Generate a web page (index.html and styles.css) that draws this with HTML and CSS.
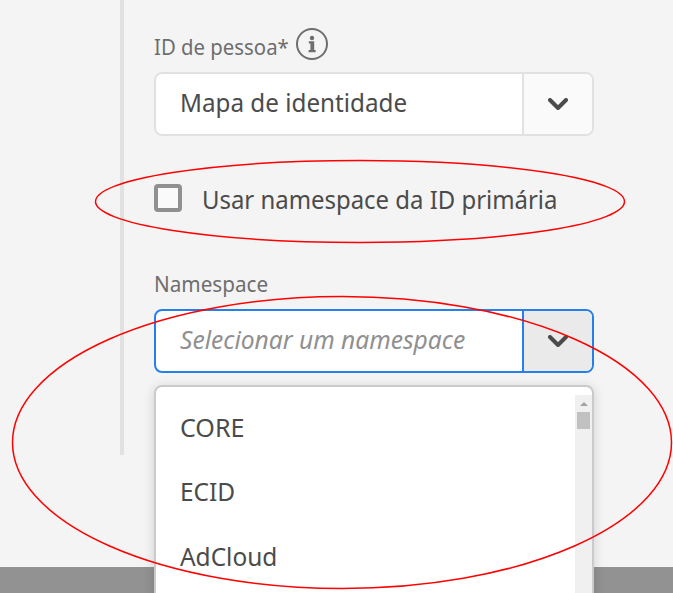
FILE: index.html
```html
<!DOCTYPE html>
<html lang="pt">
<head>
<meta charset="utf-8">
<title>ID de pessoa</title>
<link rel="stylesheet" href="styles.css">
</head>
<body>
<main class="page">
  <section class="panel">
    <div class="label-row">
      <span class="label label-person">ID de pessoa*</span>
      <svg class="info" viewBox="0 0 32 32" width="32" height="32">
        <circle cx="16" cy="16" r="15" fill="none" stroke="#6e6e6e" stroke-width="2"/>
        <circle cx="16" cy="10" r="2.2" fill="#6e6e6e"/>
        <path d="M12.800 13.300h5.400V22h1.400v2.200h-7V22h1.800v-6.500h-1.600z" fill="#6e6e6e"/>
      </svg>
    </div>
    <div class="select">
      <div class="value"><span class="text-map">Mapa de identidade</span></div>
      <div class="toggle">
        <svg viewBox="0 0 20 12" width="20" height="12"><path d="M2 2l8 8 8-8" class="chevron"/></svg>
      </div>
    </div>
    <label class="check-row">
      <span class="box"></span>
      <span class="text-check">Usar namespace da ID primária</span>
    </label>
    <div class="label-row second"><span class="label label-ns">Namespace</span></div>
    <div class="select focused">
      <div class="value"><span class="text-placeholder">Selecionar um namespace</span></div>
      <div class="toggle">
        <svg viewBox="0 0 20 12" width="20" height="12"><path d="M2 2l8 8 8-8" class="chevron"/></svg>
      </div>
      <div class="menu">
        <ul class="options">
          <li><span class="opt-core">CORE</span></li>
          <li><span class="opt-ecid">ECID</span></li>
          <li><span class="opt-ad">AdCloud</span></li>
        </ul>
        <div class="scrollbar"><span class="arrow"></span><span class="thumb"></span></div>
      </div>
    </div>
  </section>
  <footer class="footer"></footer>
  <svg class="annotations" viewBox="0 0 673 593" width="673" height="593">
    <ellipse cx="360" cy="201.500" rx="264.500" ry="41"/>
    <ellipse cx="342" cy="442.500" rx="329.500" ry="146"/>
  </svg>
</main>
</body>
</html>
```
FILE: styles.css
```css
* { box-sizing: border-box; }
body { margin: 0; font-family: "Noto Sans", sans-serif; color: #4b4b4b; }
.page { position: relative; width: 673px; height: 593px; overflow: hidden; background: #f4f4f4; display: flex; flex-direction: column; justify-content: space-between; }
.panel { margin-left: 120px; width: 474px; height: 455px; border-left: 4px solid #e1e1e1; padding: 28px 0 0 30px; }
.label-row { display: flex; align-items: center; height: 32px; margin-bottom: 12px; }
.label { font-size: 22px; line-height: 32px; color: #6e6e6e; white-space: nowrap; transform-origin: left; padding-top: 4px; }
.label-person { width: 142px; transform: scaleX(.925); }
.label-ns { transform: scaleX(.94); }
.info { flex: none; }
.select { position: relative; display: flex; width: 440px; height: 64px; border: 2px solid #e1e1e1; border-radius: 8px; background: #fff; }
.value { flex: 1; padding-left: 24px; font-size: 26px; line-height: 56px; white-space: nowrap; }
.value span, .check-row > span, .options span { display: inline-block; transform-origin: left; white-space: nowrap; }
.text-map { transform: scaleX(.932); }
.toggle { width: 70px; border-left: 2px solid #e1e1e1; border-radius: 0 6px 6px 0; background: #fafafa; display: flex; align-items: center; justify-content: center; }
.chevron { fill: none; stroke: #4b4b4b; stroke-width: 4; stroke-linecap: round; stroke-linejoin: round; }
.check-row { display: flex; align-items: center; height: 64px; margin-top: 30px; gap: 20px; font-size: 26px; }
.check-row .box { flex: none; width: 28px; height: 28px; border: 4px solid #909090; border-radius: 4px; background: #fafafa; }
.text-check { padding-top: 2px; transform: scaleX(.92); }
.second { margin: 35px 0 12px; }
.focused { border-color: #2680eb; }
.focused .toggle { border-color: #2680eb; background: #eaeaea; }
.text-placeholder { font-style: italic; color: #909090; transform: scaleX(.945); }
.menu { position: absolute; left: -2px; top: 74px; width: 440px; height: 240px; display: flex; justify-content: space-between; border: 2px solid #cacaca; border-radius: 8px; background: #fff; box-shadow: 0 2px 12px rgba(0,0,0,.15); z-index: 1; }
.options { list-style: none; margin: 0; padding: 8px 0 0 24px; font-size: 26px; }
.options li { height: 64.300px; line-height: 64px; }
.opt-core { transform: scaleX(.965); }
.opt-ecid, .opt-ad { transform: scaleX(.94); }
.scrollbar { width: 17px; margin-top: 8px; padding-top: 7px; background: #f0f0f0; display: flex; flex-direction: column; align-items: center; }
.arrow { border: 4px solid transparent; border-top: 0; border-bottom-color: #a0a0a0; }
.thumb { width: 13px; height: 17px; margin-top: 6px; background: #c1c1c1; }
.footer { height: 26px; background: #929292; }
.annotations { position: absolute; inset: 0; z-index: 2; fill: none; stroke: #f00; stroke-width: 1.5; pointer-events: none; }
```
